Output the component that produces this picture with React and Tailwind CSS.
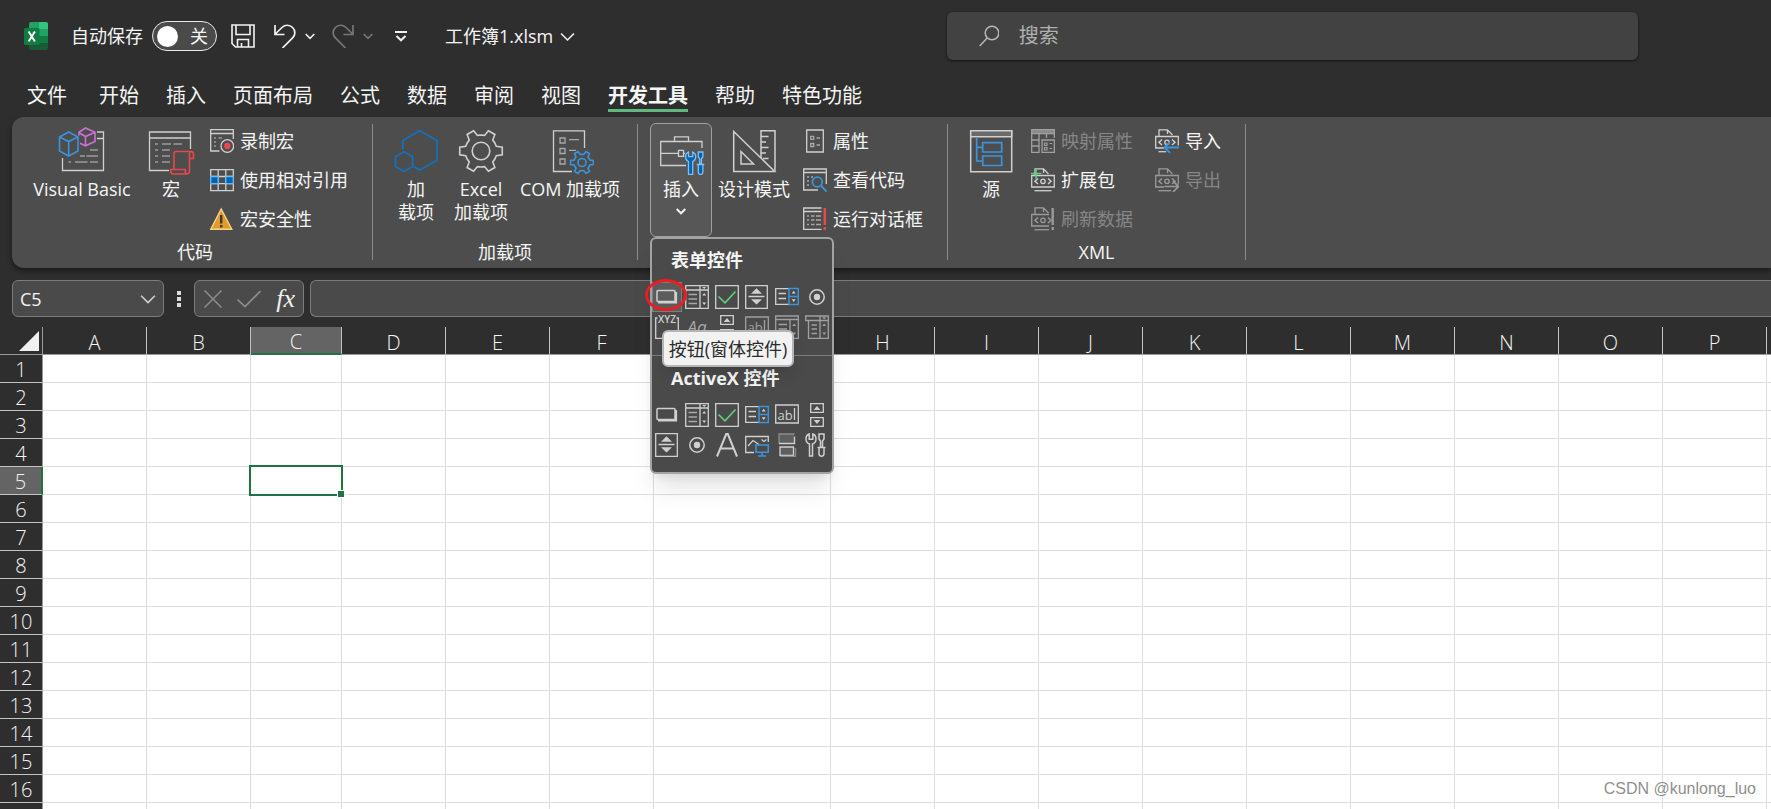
import { useState } from "react";

const TABS = [
  "文件",
  "开始",
  "插入",
  "页面布局",
  "公式",
  "数据",
  "审阅",
  "视图",
  "开发工具",
  "帮助",
  "特色功能",
];

const COLUMNS = "ABCDEFGHIJKLMNOP".split("");
const ROWS = Array.from({ length: 20 }, (_, i) => i + 1);

const COLUMN_WIDTH = {
  C: "w-[91px] min-w-[91px]",
  G: "w-[177px] min-w-[177px]",
};

const GRAY = "#d0d0d0";
const DIM = "#8c8c8c";
const BLUE = "#3b94d9";
const RED = "#e8484d";
const GREEN = "#5fd07a";

/* ---------- Iconos ---------- */

function Icon({ size = 24, stroke = GRAY, width = 1.3, children }) {
  return (
    <svg
      width={size}
      height={size}
      viewBox={`0 0 ${size} ${size}`}
      fill="none"
      stroke={stroke}
      strokeWidth={width}
      className="shrink-0"
      aria-hidden="true"
    >
      {children}
    </svg>
  );
}

function Chevron({ size = 10, stroke = "#f0f0f0", width = 1.6 }) {
  return (
    <svg
      width={size}
      height={size}
      viewBox="0 0 10 10"
      fill="none"
      stroke={stroke}
      strokeWidth={width}
      className="shrink-0"
      aria-hidden="true"
    >
      <path d="M.7 3l4.3 4.3L9.3 3" vectorEffect="non-scaling-stroke" />
    </svg>
  );
}

function gearPath(cx, cy, outer, inner) {
  const pts = [];
  for (let k = 0; k < 6; k++) {
    [
      [-17, inner],
      [-10, outer],
      [10, outer],
      [17, inner],
      [30, inner],
    ].forEach(([deg, r]) => {
      const a = ((k * 60 + deg) * Math.PI) / 180;
      pts.push(
        `${(cx + r * Math.cos(a)).toFixed(2)} ${(cy + r * Math.sin(a)).toFixed(2)}`,
      );
    });
  }
  return `M${pts.join("L")}Z`;
}

function ExcelLogo() {
  return (
    <svg width="24" height="28" viewBox="0 0 24 28" aria-hidden="true">
      <path d="M5 2a2 2 0 0 1 2-2h7.5v7H5z" fill="#21a366" />
      <path d="M14.500 0H22a2 2 0 0 1 2 2v5h-9.500z" fill="#33c481" />
      <path d="M5 7h9.500v7H5z" fill="#107c41" />
      <path d="M14.500 7H24v7h-9.500z" fill="#21a366" />
      <path d="M5 14h9.500v7H5z" fill="#185c37" />
      <path d="M14.500 14H24v7h-9.500z" fill="#107c41" />
      <path d="M5 21h19v5a2 2 0 0 1-2 2H7a2 2 0 0 1-2-2z" fill="#185c37" />
      <rect x="0" y="6" width="15.500" height="17" rx="1.500" fill="#107c41" />
      <path
        d="M4.600 9.500l6.300 10M10.900 9.500l-6.300 10"
        stroke="#fff"
        strokeWidth="2"
      />
    </svg>
  );
}

function SaveIcon() {
  return (
    <Icon stroke="#f2f2f2" width={1.6}>
      <path d="M1 1h22v22H4.500L1 19.500z" />
      <path d="M5 1v9.500h14V1M6.500 23v-7.500h11V23M10.500 23v-4" />
    </Icon>
  );
}

function UndoIcon() {
  return (
    <Icon stroke="#f2f2f2" width={1.7}>
      <path d="M2 1v9.500h9.500M2.300 10L9 3.500c3-3 7.800-3 10.600 0 3 3 3 7.400 0 10.400L9.500 24" />
    </Icon>
  );
}

function RedoIcon() {
  return (
    <Icon stroke="#777777" width={1.7}>
      <path d="M22 1v9.500h-9.500M21.700 10L15 3.500c-3-3-7.800-3-10.600 0-3 3-3 7.400 0 10.400L14.500 24" />
    </Icon>
  );
}

function VisualBasicIcon() {
  return (
    <Icon size={48}>
      <path d="M4.500 31v12.500h41V5H39M39 11.500h6.500" />
      <path
        d="M32 23h8M22 29h5M28.500 29H40M10.500 35h2.500M17 35h12.500M32 35h8"
        stroke="#9a9a9a"
      />
      <path
        d="M21 8.500V5.300L27.500 1 37 5.300v9.200L27.500 18.800 22 16.300M21 5.700l6.500 3.800L37 5.300M27.500 9.500v9.300"
        stroke="#cf6fd6"
        strokeWidth="1.600"
      />
      <path
        d="M10.700 5L20 10v14l-9.300 5-9.200-5V10zM1.500 10l9.200 4.500L20 10M10.700 14.500V29"
        stroke={BLUE}
        strokeWidth="1.600"
      />
    </Icon>
  );
}

function MacroIcon() {
  return (
    <Icon size={48}>
      <path d="M22 43.500H2.500V5h41v17M2.500 11h41" />
      <path
        d="M8 17h3M15 17h9M26.500 17h8.500M8 23h3M15 23h8M8 29h3M15 29h8M8 35h3M15 35h8"
        stroke="#9a9a9a"
      />
      <path
        d="M27 42.500V26.500c0-1.200.8-2 2-2h14.500c1.700 0 3 1 3 2.500v4.500H42.500M42.500 31.500V44c0 1.800-1.200 3-3 3H26.500c-1.700 0-2.700-1-2.700-2.500v-2h14.500V45c0 1.200.8 2 2 2M42.500 31.500V27c0-1.500.5-2.500 2-2.500"
        stroke={RED}
        strokeWidth="1.600"
      />
    </Icon>
  );
}

function RecordIcon() {
  return (
    <Icon>
      <path d="M9.500 22H.7V.7h22.600V10M.7 4.500h22.600" />
      <path d="M4 9h2M8.500 9H12M4 13h2M4 17h2" stroke="#9a9a9a" />
      <circle cx="17.300" cy="17" r="6.300" />
      <circle cx="17.300" cy="17" r="3.200" fill={RED} stroke="none" />
    </Icon>
  );
}

function RelativeIcon() {
  return (
    <Icon>
      <path d="M.7 1.700h22.600v21H.7zM8.200 1.700v21M15.800 1.700v21M.7 8.500h22.600M.7 15.700h22.600" />
      <path
        d="M.7 8.500h7.500v7.200H.7zM15.800 8.500h7.500v7.200h-7.500z"
        fill="#0063b1"
        stroke="#6db8f0"
      />
    </Icon>
  );
}

function WarningIcon() {
  return (
    <Icon>
      <path
        d="M11.200 2L21.800 22.300H.8z"
        fill="#e39a2b"
        stroke="#f3d28a"
        strokeWidth="1.400"
      />
      <path d="M11.200 8v8.500M11.200 18v2.500" stroke="#3a3a3a" strokeWidth="2.400" />
    </Icon>
  );
}

function HexIcon() {
  return (
    <Icon size={48} stroke="#1471bd" width={1.8}>
      <path d="M10.800 22v-8.500L27.700 3.800 45 13.500v20L27.700 43 22 39.700" />
      <path d="M12 24.700l8.700 5v9.800l-8.700 5-8.500-5v-9.800z" />
    </Icon>
  );
}

function GearIcon() {
  return (
    <Icon size={48} width={1.6}>
      <path d={gearPath(24, 24, 21.6, 16)} />
      <circle cx="24" cy="24" r="8.800" />
    </Icon>
  );
}

function ComIcon() {
  return (
    <Icon size={48}>
      <path d="M26 44.500H7.500V3.800h31V21" />
      <path
        d="M14 11h5v5h-5zM14 21.500h5v5h-5zM14 32h5v5h-5zM23 12.700h10M23 23.300h7"
        stroke="#a8a8a8"
      />
      <path
        d={gearPath(36, 35.5, 11.6, 8.2)}
        stroke={BLUE}
        strokeWidth="1.600"
      />
      <circle cx="36" cy="35.500" r="4" stroke={BLUE} strokeWidth="1.600" />
    </Icon>
  );
}

function ToolboxIcon() {
  return (
    <Icon size={48}>
      <path d="M45 21v-6.500H3.700v24H29M17.500 14.500V9.800h14v4.700M3.700 26.300h17.600M26.800 26.300H28" />
      <path d="M21.500 23.300h5v6h-5z" />
      <path
        d="M31.500 47.300V34.500c-1.800-.8-3-2.500-3-4.700s1.200-4 3-4.800v4.600h4.200V25c1.800.8 3 2.600 3 4.800s-1.200 3.900-3 4.700v12.800z"
        fill="#0063b1"
        stroke="#7cc0f2"
      />
      <path
        d="M41.300 25h4.600v5l-1.400 1.500v5h-1.800v-5L41.300 30zM39.700 37.500h7.600M41.300 37.500h4.600V45c0 1.500-1 2.500-2.300 2.500s-2.300-1-2.300-2.500z"
        fill="#0063b1"
        stroke="#7cc0f2"
      />
    </Icon>
  );
}

function DesignIcon() {
  return (
    <Icon size={48} width={1.5}>
      <path d="M3.700 4.500v40h41zM11 24.500V37h12.500z" />
      <path d="M31 31V3.700h14v40M31 9.500h7.500M31 15h5M31 20.500h7.500M31 26h5M33 31.500h5.500" />
    </Icon>
  );
}

function PropertiesIcon() {
  return (
    <Icon>
      <path d="M3.700 1h16.600v22H3.700z" />
      <path
        d="M7.700 7.300h3v3h-3zM7.700 14.500h3v3h-3zM13.500 9H17M13.500 16H17"
        stroke="#a8a8a8"
      />
    </Icon>
  );
}

function ViewCodeIcon() {
  return (
    <Icon>
      <path d="M15 22H.7V1h22.600v15M.7 4.500h22.600" />
      <path d="M4 9h2M8 9h2M4 13h2M4 17h2" stroke="#a8a8a8" />
      <circle cx="14.300" cy="14" r="4.900" stroke={BLUE} strokeWidth="1.800" />
      <path d="M18 17.700l5.700 5.800" stroke={BLUE} strokeWidth="2" />
    </Icon>
  );
}

function RunDialogIcon() {
  return (
    <Icon>
      <path d="M18.500 22.300H.7V1h17.800M.7 4.500h17.800" />
      <path
        d="M4 9h2M8 9h3.500M13 9h5M4 13h2M8 13h3.500M13 13h5M4 17.500h2M8 17.500h3.500M13 17.500h5"
        stroke="#a8a8a8"
      />
      <path d="M21.800 1v17M21.800 20v3" stroke={RED} strokeWidth="2.400" />
    </Icon>
  );
}

function SourceIcon() {
  return (
    <Icon size={48} width={1.5}>
      <path d="M3.700 3.700h41v41h-41z" />
      <path d="M3.700 3.700h41v6h-41z" fill="#6a6a6a" />
      <path
        d="M9.700 10.500V34h6M9.700 20.300h6M15.700 15.700h19v9.300h-19zM15.700 29h19v9.500h-19z"
        stroke={BLUE}
        strokeWidth="1.700"
      />
    </Icon>
  );
}

function MapPropertiesIcon() {
  return (
    <Icon stroke="#a0a0a0">
      <path d="M.7.7h22.600v4H.7z" fill="#8a8a8a" />
      <path d="M.7 4.700v18.600h8M8 4.700v18.600M15.500 4.700V9M23.300 4.700V9M.7 11h8M.7 17h8" />
      <path d="M11 11h12.300v12.300H11z" />
      <path
        d="M13.500 14h2.500v2.500h-2.500zM18.500 14.500H21M13.500 18.500h2.500V21h-2.500zM18.500 19.500H21"
        strokeWidth="1.200"
      />
    </Icon>
  );
}

// Base común de los iconos XML: hoja, franja de código y sombra inferior
function XmlFile({ stroke = GRAY, cutRight = false, underline, children }) {
  return (
    <Icon stroke={stroke}>
      <path d="M4 7V.8h8.500L17.500 6M12.500.8V5" />
      <path d={cutRight ? "M18 7.500H.7V19H18" : "M.7 7.500h22.600V19H.7z"} />
      <path d={underline ?? "M3.500 22.700h17"} />
      <path d="M7 10.500L4 13.300l3 2.700M17 10.500l3 2.800-3 2.700" strokeWidth="1.500" />
      <circle cx="12" cy="13.300" r="2.200" />
      {children}
    </Icon>
  );
}

function ExpansionIcon() {
  return (
    <XmlFile>
      <path d="M0 5.500h10.500M5 0v10.500" stroke={GREEN} strokeWidth="1.600" />
    </XmlFile>
  );
}

function RefreshIcon() {
  return (
    <XmlFile stroke="#9a9a9a" cutRight underline="M3.500 22.700H18">
      <path d="M21.700 1v17M21.700 20v3" strokeWidth="2.400" />
    </XmlFile>
  );
}

function ImportIcon() {
  return (
    <XmlFile underline="M3.500 22.700H11">
      <path d="M9 18.500h15" stroke="#4d4d4d" strokeWidth="4" />
      <path d="M24 18.500H10M15 13l-5.500 5.500L15 24" stroke={BLUE} strokeWidth="1.800" />
    </XmlFile>
  );
}

function ExportIcon() {
  return (
    <XmlFile stroke="#9a9a9a" underline="M3.500 22.700H16">
      <path d="M9 18.500h15" stroke="#4d4d4d" strokeWidth="4" />
      <path d="M9.500 18.500H23M18 13l5.500 5.500L18 24" strokeWidth="1.700" />
    </XmlFile>
  );
}

/* ---------- Iconos de la galería de controles ---------- */

function ButtonControl() {
  return (
    <Icon width={1.5}>
      <rect x="2" y="5.500" width="18" height="11" rx="1" />
      <path d="M3 17.300h18V7" strokeWidth="2.200" />
    </Icon>
  );
}

function ComboControl() {
  return (
    <Icon>
      <path d="M.7.7h22.600v22.600H.7zM.7 5h22.600M15 .7v22.600" />
      <path d="M3.500 9.500H12M3.500 14H12M3.500 18.500H12" stroke="#a8a8a8" />
      <path
        d="M17.200 2h4L19.200 4zM17.200 10.500h4l-2-2.500zM17.200 17.500h4l-2 2.500z"
        fill={GRAY}
        stroke="none"
      />
    </Icon>
  );
}

function CheckControl() {
  return (
    <Icon>
      <path d="M.7.7h22.600v22.600H.7z" />
      <path d="M3.500 11.500l6.500 6.300L20.500 6.500" stroke={GREEN} strokeWidth="1.600" />
    </Icon>
  );
}

function SpinControl() {
  return (
    <Icon>
      <path d="M.7.7h21.600v22.600H.7zM3.500 11.500h16" />
      <path d="M11.500 3.300l5.500 5.500H6zM11.500 19.500L6 14.300h11z" fill={GRAY} stroke="none" />
    </Icon>
  );
}

function ListControl() {
  return (
    <Icon>
      <path d="M14 3.700H.7v15.600H14M3.500 8.500H11M3.500 13.500H11" />
      <path d="M14 3.500h9.300v16H14zM14 11.500h9.300" stroke={BLUE} strokeWidth="1.500" />
      <path d="M18.700 5.800l2 2.700h-4zM18.700 17l-2-2.700h4z" fill={GRAY} stroke="none" />
    </Icon>
  );
}

function OptionControl() {
  return (
    <Icon width={1.5}>
      <circle cx="12" cy="12" r="7.200" />
      <circle cx="12" cy="12" r="3.200" fill={GRAY} stroke="none" />
    </Icon>
  );
}

function GroupControl() {
  return (
    <Icon>
      <path d="M2.500 3H.7v20.300h22.600V3H21.500" />
      <text
        x="12"
        y="8"
        textAnchor="middle"
        fontSize="10"
        fontWeight="600"
        fill={GRAY}
        stroke="none"
      >
        XYZ
      </text>
    </Icon>
  );
}

function LabelControl() {
  return (
    <Icon>
      <text
        x="12"
        y="18"
        textAnchor="middle"
        fontSize="17"
        fontStyle="italic"
        fill="#a8a8a8"
        stroke="none"
      >
        Aa
      </text>
    </Icon>
  );
}

function ScrollControl() {
  return (
    <Icon>
      <path d="M5.700.7h12.600v8.600H5.700zM5.700 14.700h12.600v8.600H5.700z" />
      <path d="M12 3l3.300 4H8.700zM12 21l-3.300-4h6.600z" fill={GRAY} stroke="none" />
    </Icon>
  );
}

function TextControl({ color = GRAY }) {
  return (
    <Icon stroke={color}>
      <path d="M.7 2h22.600v18H.7zM19.500 5v12" />
      <text
        x="10"
        y="17"
        textAnchor="middle"
        fontSize="13"
        fill={color}
        stroke="none"
      >
        ab
      </text>
    </Icon>
  );
}

function DimListControl() {
  return (
    <Icon stroke="#a0a0a0">
      <path d="M.7 1h22.600v22.300H.7zM.7 4.500h22.600M15 4.500v18.800M3.500 9.500H12M3.500 14H12M3.500 18.500H12" />
      <path d="M17.200 11h4l-2-2.500zM17.200 17.500h4l-2 2.500z" fill="#a0a0a0" stroke="none" />
    </Icon>
  );
}

function DimComboControl() {
  return (
    <Icon stroke="#a0a0a0">
      <path d="M.7 1h22.600v4.500H.7zM3.500 5.500v17.800h19.800V5.500M15 1v22.300M6.500 10H12M6.500 14H12M6.500 18.500H12" />
      <path
        d="M17.200 2.300h4l-2 2.300zM17.200 11h4l-2-2.500zM17.200 17.500h4l-2 2.500z"
        fill="#a0a0a0"
        stroke="none"
      />
    </Icon>
  );
}

function LetterControl() {
  return (
    <Icon width={2}>
      <path d="M2 23.500L11.200 1h1.600L22 23.500M5.500 15.500h13" />
    </Icon>
  );
}

function ImageControl() {
  return (
    <Icon>
      <path d="M9 19.500H.7V3.500h22.600V9M3 13l5-5.500 6 4M16.500 6.500l2.500 2 2.500-2" />
      <path d="M11 12h12.300v7.300H11z" fill="#4a4a4a" stroke={BLUE} strokeWidth="1.600" />
      <path d="M17 19.300v3.500M13 23h8" stroke={BLUE} strokeWidth="1.600" />
    </Icon>
  );
}

function ToggleControl() {
  return (
    <Icon>
      <path d="M4 1h15v9H4z" fill="#5f5f5f" stroke="none" />
      <path d="M4 10.500V1h15.500" stroke="#8c8c8c" />
      <path d="M4 10.500h15.500V3.500" />
      <path d="M5 14h13.500v8.500H5z" fill="#5f5f5f" />
      <path d="M20.500 15v8.500H6" stroke="#8c8c8c" />
    </Icon>
  );
}

function MoreToolsControl() {
  return (
    <Icon width={1.5}>
      <path d="M4.500 23V11C2.500 10.300 1 8.500 1 6c0-2.300 1.300-4.300 3.200-5v5.300h3.600V1C9.700 1.700 11 3.700 11 6c0 2.500-1.500 4.300-3.500 5v12z" />
      <path d="M14 1h5v5l-1.500 2v6h-2V8L14 6zM12.500 14.500h8M14 14.500h5v6c0 1.600-1 2.700-2.500 2.700S14 22 14 20.500z" />
    </Icon>
  );
}

const FORM_CONTROLS = [
  { name: "按钮", icon: <ButtonControl /> },
  { name: "组合框", icon: <ComboControl /> },
  { name: "复选框", icon: <CheckControl /> },
  { name: "数值调节钮", icon: <SpinControl /> },
  { name: "列表框", icon: <ListControl /> },
  { name: "选项按钮", icon: <OptionControl /> },
  { name: "分组框", icon: <GroupControl /> },
  { name: "标签", icon: <LabelControl /> },
  { name: "滚动条", icon: <ScrollControl /> },
  { name: "文本域", icon: <TextControl color="#a0a0a0" /> },
  { name: "组合列表编辑框", icon: <DimListControl /> },
  { name: "组合下拉编辑框", icon: <DimComboControl /> },
];

const ACTIVEX_CONTROLS = [
  { name: "命令按钮", icon: <ButtonControl /> },
  { name: "组合框", icon: <ComboControl /> },
  { name: "复选框", icon: <CheckControl /> },
  { name: "列表框", icon: <ListControl /> },
  { name: "文本框", icon: <TextControl /> },
  { name: "滚动条", icon: <ScrollControl /> },
  { name: "数值调节钮", icon: <SpinControl /> },
  { name: "选项按钮", icon: <OptionControl /> },
  { name: "标签", icon: <LetterControl /> },
  { name: "图像", icon: <ImageControl /> },
  { name: "切换按钮", icon: <ToggleControl /> },
  { name: "其他控件", icon: <MoreToolsControl /> },
];

/* ---------- Cinta ---------- */

function Group({ label, className, children }) {
  return (
    <section
      className={`flex h-[136px] shrink-0 flex-col justify-between border-r border-[#8a8a8a] ${className}`}
    >
      <div className="flex items-start pl-3">{children}</div>
      <div className="text-center leading-4">{label}</div>
    </section>
  );
}

function BigButton({ icon, className, children }) {
  return (
    <button
      type="button"
      className={`flex shrink-0 flex-col items-center gap-[3px] pt-[3px] leading-[23px] whitespace-nowrap ${className}`}
    >
      {icon}
      <span>{children}</span>
    </button>
  );
}

function SmallButton({ icon, disabled, children }) {
  return (
    <button
      type="button"
      disabled={disabled}
      className="flex h-[34px] items-center gap-1.5 whitespace-nowrap disabled:text-[#868686]"
    >
      {icon}
      {children}
    </button>
  );
}

function ControlGrid({ items, selected }) {
  return (
    <div className="grid grid-cols-6">
      {items.map((item, i) => (
        <button
          key={item.name}
          type="button"
          aria-label={item.name}
          className={`flex h-[30px] items-center justify-center border ${
            selected === i
              ? "border-[#7d7d7d] bg-[#5c5c5c]"
              : "border-transparent"
          }`}
        >
          {item.icon}
        </button>
      ))}
    </div>
  );
}

function ControlsMenu() {
  return (
    <div className="absolute top-full left-0 z-20 w-[184px] rounded-md border-2 border-[#a3a3a3] bg-[#4a4a4a] pb-3 text-left shadow-xl">
      <h3 className="pl-[19px] leading-[43px] font-bold">表单控件</h3>
      <ControlGrid items={FORM_CONTROLS} selected={0} />
      <hr className="mt-[13px] border-[#7d7d7d]" />
      <h3 className="pl-[19px] leading-[44px] font-bold">ActiveX 控件</h3>
      <ControlGrid items={ACTIVEX_CONTROLS} />

      <div
        role="tooltip"
        className="absolute top-[91px] left-[10px] flex h-[37px] w-[132px] items-center justify-center rounded-md border-2 border-[#b5b5b5] bg-[#f2f2f2] whitespace-nowrap text-[#2b2b2b] shadow-lg"
      >
        按钮(窗体控件)
      </div>
      <div className="absolute top-[40px] -left-[7px] h-8 w-[42px] rounded-[50%] border-[3px] border-[#ec1c24]" />
    </div>
  );
}

function Ribbon() {
  const [open, setOpen] = useState(true);

  return (
    <div className="ml-3 flex h-[151px] shrink-0 rounded-l-xl bg-[#4d4d4d] pt-[7px] pl-1.5 shadow-[0_3px_5px_rgba(0,0,0,0.45)]">
      <Group label="代码" className="w-[355px]">
        <BigButton icon={<VisualBasicIcon />} className="w-[104px]">
          Visual Basic
        </BigButton>
        <BigButton icon={<MacroIcon />} className="ml-[11px] w-[52px]">
          宏
        </BigButton>
        <div className="ml-[13px] flex flex-col gap-[5px]">
          <SmallButton icon={<RecordIcon />}>录制宏</SmallButton>
          <SmallButton icon={<RelativeIcon />}>使用相对引用</SmallButton>
          <SmallButton icon={<WarningIcon />}>宏安全性</SmallButton>
        </div>
      </Group>

      <Group label="加载项" className="w-[265px]">
        <BigButton icon={<HexIcon />} className="w-[62px]">
          加
          <br />
          载项
        </BigButton>
        <BigButton icon={<GearIcon />} className="ml-0.5 w-16">
          Excel
          <br />
          加载项
        </BigButton>
        <BigButton icon={<ComIcon />} className="ml-[3px] w-[108px]">
          COM 加载项
        </BigButton>
      </Group>

      <Group label={open ? null : "控件"} className="w-[310px]">
        <div className="relative -mt-px h-[114px]">
          <button
            type="button"
            aria-expanded={open}
            onClick={() => setOpen(!open)}
            className="flex h-full w-[62px] flex-col items-center gap-[3px] rounded-md border border-[#a0a0a0] bg-[#575757] pt-[3px] leading-[23px]"
          >
            <ToolboxIcon />
            <span className="mb-0.5">插入</span>
            <Chevron width={2} />
          </button>
          {open && <ControlsMenu />}
        </div>
        <BigButton icon={<DesignIcon />} className="ml-[5px] w-[74px]">
          设计模式
        </BigButton>
        <div className="ml-3 flex flex-col gap-[5px]">
          <SmallButton icon={<PropertiesIcon />}>属性</SmallButton>
          <SmallButton icon={<ViewCodeIcon />}>查看代码</SmallButton>
          <SmallButton icon={<RunDialogIcon />}>运行对话框</SmallButton>
        </div>
      </Group>

      <Group label="XML" className="w-[298px]">
        <BigButton icon={<SourceIcon />} className="w-[62px]">
          源
        </BigButton>
        <div className="ml-[9px] flex flex-col gap-[5px]">
          <SmallButton icon={<MapPropertiesIcon />} disabled>
            映射属性
          </SmallButton>
          <SmallButton icon={<ExpansionIcon />}>扩展包</SmallButton>
          <SmallButton icon={<RefreshIcon />} disabled>
            刷新数据
          </SmallButton>
        </div>
        <div className="ml-[22px] flex flex-col gap-[5px]">
          <SmallButton icon={<ImportIcon />}>导入</SmallButton>
          <SmallButton icon={<ExportIcon />} disabled>
            导出
          </SmallButton>
        </div>
      </Group>
    </div>
  );
}

/* ---------- Barra de título ---------- */

function TitleBar() {
  const [autosave, setAutosave] = useState(false);

  return (
    <header className="flex h-[72px] shrink-0 items-center">
      <div className="flex w-[947px] shrink-0 items-center pl-6">
        <ExcelLogo />
        <span id="autosave" className="ml-[23px]">
          自动保存
        </span>
        <button
          type="button"
          role="switch"
          aria-checked={autosave}
          aria-labelledby="autosave"
          onClick={() => setAutosave(!autosave)}
          className="ml-[9px] flex h-[30px] w-[65px] items-center justify-between rounded-full border border-[#e8e8e8] bg-[#4a4a4a] pr-2 pl-1"
        >
          <span className="size-[21px] rounded-full bg-white" />
          {autosave ? "开" : "关"}
        </button>
        <button type="button" aria-label="保存" className="ml-[14px]">
          <SaveIcon />
        </button>
        <button
          type="button"
          aria-label="撤消"
          className="ml-[18px] flex items-center gap-2"
        >
          <UndoIcon />
          <Chevron />
        </button>
        <button
          type="button"
          aria-label="恢复"
          className="ml-4 flex items-center gap-2"
          disabled
        >
          <RedoIcon />
          <Chevron stroke="#777777" />
        </button>
        <button type="button" aria-label="自定义快速访问工具栏" className="ml-[22px]">
          <svg width="12" height="12" fill="none" stroke="#f0f0f0" strokeWidth="2">
            <path d="M0 2h12M1.500 6L6 10.300 10.500 6" />
          </svg>
        </button>
        <button type="button" className="ml-[38px] flex items-center gap-[7px]">
          工作簿1.xlsm
          <Chevron size={15} />
        </button>
      </div>
      <label className="mr-[133px] flex h-12 flex-1 items-center gap-5 rounded-md bg-[#424242] pl-8 shadow-[0_1px_3px_rgba(0,0,0,0.6)]">
        <svg width="21" height="22" fill="none" stroke="#b8b8b8" strokeWidth="1.500">
          <circle cx="13" cy="8" r="6.800" />
          <path d="M8.200 13L.7 21" />
        </svg>
        <input
          type="search"
          aria-label="搜索"
          placeholder="搜索"
          className="w-full bg-transparent text-xl outline-none placeholder:text-[#b0b0b0]"
        />
      </label>
    </header>
  );
}

function TabBar() {
  const [active, setActive] = useState("开发工具");

  return (
    <nav className="flex h-[45px] shrink-0 items-start gap-[27px] pt-[10px] pl-[27px] text-xl">
      {TABS.map((tab) => (
        <button
          key={tab}
          type="button"
          onClick={() => setActive(tab)}
          className={`shrink-0 border-b-[3px] leading-[27px] first:mr-[5px] ${
            active === tab
              ? "border-[#5fb882] font-bold"
              : "border-transparent"
          }`}
        >
          {tab}
        </button>
      ))}
    </nav>
  );
}

function FormulaBar() {
  const box = "flex h-[37px] items-center border border-[#7c7c7c] bg-[#4a4a4a]";

  return (
    <div className="flex shrink-0 items-center pt-3 pb-[10px] pl-3">
      <div className={`${box} w-[152px] rounded-md pr-[7px] pl-[7px]`}>
        <input
          aria-label="名称框"
          defaultValue="C5"
          className="w-full min-w-0 bg-transparent outline-none"
        />
        <Chevron size={16} stroke="#d0d0d0" />
      </div>
      <div className="mx-[13px] flex flex-col gap-0.5">
        <span className="size-1 bg-[#dcdcdc]" />
        <span className="size-1 bg-[#dcdcdc]" />
        <span className="size-1 bg-[#dcdcdc]" />
      </div>
      <div className={`${box} w-[110px] justify-between rounded-md pr-2 pl-[9px]`}>
        <button type="button" aria-label="取消">
          <svg width="18" height="18" stroke={DIM} strokeWidth="1.500">
            <path d="M.5.500l17 17M17.500.500l-17 17" />
          </svg>
        </button>
        <button type="button" aria-label="输入">
          <svg width="24" height="18" fill="none" stroke={DIM} strokeWidth="1.700">
            <path d="M.5 9.500l7.500 7L23.500 1" />
          </svg>
        </button>
        <button
          type="button"
          aria-label="插入函数"
          className="font-['Liberation_Serif',serif] text-[26px] leading-[30px] text-[#f0f0f0] italic"
        >
          fx
        </button>
      </div>
      <input
        aria-label="编辑栏"
        className={`${box} ml-1.5 min-w-0 flex-1 rounded-l-md border-r-0 px-2 outline-none`}
      />
    </div>
  );
}

/* ---------- Hoja ---------- */

function Sheet() {
  const [cell] = useState({ col: "C", row: 5 });

  return (
    <div className="min-h-0 flex-1 overflow-hidden bg-white">
      <table className="w-full min-w-max border-separate border-spacing-0 text-xl leading-6 font-light">
        <thead>
          <tr className="bg-[#2e2e2e]">
            <th className="h-7 w-[43px] min-w-[43px] border-r border-b border-[#9a9a9a] p-0">
              <svg width="20" height="20" className="ml-[19px]" aria-hidden="true">
                <path d="M20 0v20H0z" fill="#f0f0f0" />
              </svg>
            </th>
            {COLUMNS.map((col) => (
              <th
                key={col}
                scope="col"
                className={`h-7 border-r border-r-[#c4c4c4] p-0 pt-[3px] leading-[23px] font-light ${
                  COLUMN_WIDTH[col] ?? "w-[104px] min-w-[104px]"
                } ${
                  cell.col === col
                    ? "border-b-2 border-b-[#217346] bg-[#646464]"
                    : "border-b border-b-[#9a9a9a]"
                }`}
              >
                {col}
              </th>
            ))}
            <th className="h-7 border-b border-[#9a9a9a] p-0" />
          </tr>
        </thead>
        <tbody>
          {ROWS.map((row) => (
            <tr key={row}>
              <th
                scope="row"
                className={`h-7 border-b border-b-[#c4c4c4] p-0 pt-[3px] font-light ${
                  cell.row === row
                    ? "border-r-2 border-r-[#217346] bg-[#646464]"
                    : "border-r border-r-[#9a9a9a] bg-[#2e2e2e]"
                }`}
              >
                {row}
              </th>
              {COLUMNS.map((col) =>
                cell.col === col && cell.row === row ? (
                  <td
                    key={col}
                    className="relative z-10 border-r border-b border-[#dedede] p-0"
                  >
                    <div className="absolute -inset-0.5 border-2 border-[#217346]">
                      <span className="absolute -right-1 -bottom-1 size-2 border border-white bg-[#217346]" />
                    </div>
                  </td>
                ) : (
                  <td key={col} className="border-r border-b border-[#dedede] p-0" />
                ),
              )}
              <td className="border-b border-[#dedede] p-0" />
            </tr>
          ))}
        </tbody>
      </table>
    </div>
  );
}

export default function App() {
  return (
    <div className="relative flex h-screen flex-col overflow-hidden bg-[#2e2e2e] font-['Open_Sans','Noto_Sans_CJK_SC',sans-serif] text-lg text-[#f5f5f5]">
      <TitleBar />
      <TabBar />
      <Ribbon />
      <FormulaBar />
      <Sheet />
      <span className="absolute right-[15px] bottom-2 z-10 font-['Liberation_Sans',sans-serif] text-base text-[#8f8f8f]">
        CSDN @kunlong_luo
      </span>
    </div>
  );
}
